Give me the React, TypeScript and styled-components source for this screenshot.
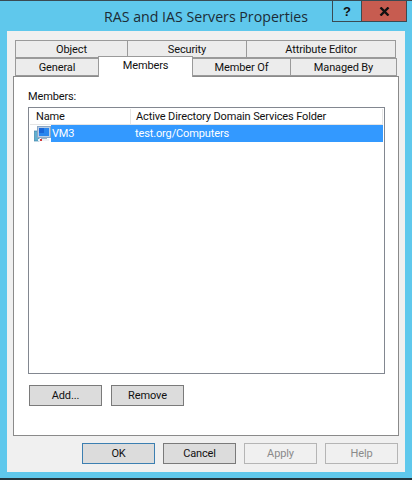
import React from 'react';
import styled, { createGlobalStyle } from 'styled-components';

const GlobalStyle = createGlobalStyle`
  html, body {
    margin: 0;
    padding: 0;
    background: #5fc8ec;
  }
  * {
    box-sizing: border-box;
  }
`;

const Window = styled.div`
  position: relative;
  width: 412px;
  height: 480px;
  display: flex;
  flex-direction: column;
  background: #5fc8ec;
  border-top: 1px solid #3a4a52;
  border-bottom: 2px solid #23343c;
  font-family: Roboto, 'Liberation Sans', sans-serif;
  font-size: 11px;
  letter-spacing: -0.13px;
  color: #111;
  overflow: hidden;
`;

const TitleBar = styled.div`
  height: 30px;
  flex: none;
  display: flex;
  align-items: center;
  justify-content: center;
  font-family: 'Open Sans', sans-serif;
  font-size: 14.2px;
  letter-spacing: 0;
  color: #1c2c36;
`;

const Controls = styled.div`
  position: absolute;
  top: 0;
  right: 5px;
  display: flex;
`;

const HelpControl = styled.div`
  width: 29px;
  height: 21px;
  display: flex;
  align-items: center;
  justify-content: center;
  border: 1px solid #3a4a52;
  border-top: none;
  border-right: none;
  font: bold 13px 'Liberation Sans', sans-serif;
  color: #111;
`;

const CloseControl = styled.div`
  width: 46px;
  height: 21px;
  display: flex;
  align-items: center;
  justify-content: center;
  background: #c75c50;
  border: 1px solid #3a4a52;
  border-top: none;
`;

const Panel = styled.div`
  flex: 1;
  margin: 0 7px 6px;
  padding: 9px 6px 8px;
  display: flex;
  flex-direction: column;
  background: #f0f0f0;
`;

const TabRow = styled.div<{ $front?: boolean }>`
  display: flex;
  height: 18px;
  flex: none;
  margin: 0 2px;
  position: relative;
  z-index: ${(p) => (p.$front ? 2 : 1)};
`;

const Tab = styled.div<{ $width: number; $active?: boolean }>`
  width: ${(p) => p.$width}px;
  flex: none;
  display: flex;
  align-items: center;
  justify-content: center;
  background: ${(p) => (p.$active ? '#fff' : '#ececec')};
  border: 1px solid #9a9a9a;
  border-bottom: ${(p) => (p.$active ? 'none' : '1px solid #9a9a9a')};
  margin-top: ${(p) => (p.$active ? '-2px' : '0')};
  height: ${(p) => (p.$active ? '21px' : '18px')};
  padding: ${(p) => (p.$active ? '0 0 3px' : '1px 0 0')};
  margin-left: -1px;
  &:first-child {
    margin-left: 0;
  }
`;

const TabPage = styled.div`
  flex: 1;
  padding: 9px 13px 0 14px;
  display: flex;
  flex-direction: column;
  background: #fff;
  border: 1px solid #8a8a8a;
`;

const Label = styled.div`
  height: 21px;
  display: flex;
  align-items: center;
`;

const List = styled.div`
  height: 267px;
  flex: none;
  padding: 1px;
  border: 1px solid #828790;
  background: #fff;
`;

const HeaderRow = styled.div`
  height: 16px;
  display: flex;
  border-bottom: 1px solid #e5e5e5;
`;

const HeaderCell = styled.div<{ $width?: number }>`
  width: ${(p) => (p.$width ? `${p.$width}px` : 'auto')};
  flex: ${(p) => (p.$width ? 'none' : '1')};
  display: flex;
  align-items: center;
  padding-left: ${(p) => (p.$width ? '6px' : '5px')};
  border-right: 1px solid #e5e5e5;
`;

const MemberRow = styled.div`
  height: 17px;
  display: flex;
  align-items: center;
`;

const IconCell = styled.div`
  width: 21px;
  height: 16px;
  flex: none;
  display: flex;
  align-items: center;
  justify-content: flex-end;
`;

const SelectedBand = styled.div`
  flex: 1;
  height: 17px;
  display: flex;
  align-items: center;
  background: #3399ff;
  color: #fff;
`;

const NameCell = styled.div`
  width: 84px;
  padding-left: 1px;
`;

const ActionRow = styled.div`
  display: flex;
  gap: 9px;
  margin: 11px 0 0 1px;
`;

const Button = styled.div<{ $variant?: 'default' | 'focus' | 'disabled' }>`
  width: 73px;
  height: 21px;
  display: flex;
  align-items: center;
  justify-content: center;
  background: ${(p) => (p.$variant === 'disabled' ? '#f0f0f0' : '#dcdcdc')};
  color: ${(p) => (p.$variant === 'disabled' ? '#8a8a8a' : '#111')};
  border: 1px solid
    ${(p) =>
      p.$variant === 'focus' ? '#3c7fb1' : p.$variant === 'disabled' ? '#b5b5b5' : '#7a7a7a'};
`;

const Footer = styled.div`
  display: flex;
  justify-content: flex-end;
  gap: 8px;
  margin: 7px 1px 0 0;
`;

const ComputerIcon = () => (
  <svg width="17" height="16" viewBox="0 0 17 16">
    <rect x="0.5" y="5" width="4.5" height="10" fill="#5fb0d0" stroke="#3f86ad" strokeWidth="0.7" />
    <rect x="3.5" y="0.5" width="13" height="11" fill="#b9cfe6" stroke="#8ba6c4" />
    <rect x="5" y="2" width="10" height="8" fill="#2a86ee" />
    <rect x="5" y="2" width="5" height="5" fill="#1a66d8" />
    <rect x="7" y="11.5" width="6" height="1.5" fill="#9db2c6" />
    <rect x="4" y="13" width="11" height="2" fill="#eef2f6" />
    <rect x="6" y="13" width="2" height="2" fill="#d23b3b" />
  </svg>
);

const CloseGlyph = () => (
  <svg width="11" height="9" viewBox="0 0 11 9">
    <path d="M1.5 0.5 L9.5 8.5 M9.5 0.5 L1.5 8.5" stroke="#111" strokeWidth="2.4" />
  </svg>
);

const App: React.FC = () => {
  return (
    <Window>
      <GlobalStyle />
      <TitleBar>RAS and IAS Servers Properties</TitleBar>
      <Controls>
        <HelpControl>?</HelpControl>
        <CloseControl>
          <CloseGlyph />
        </CloseControl>
      </Controls>
      <Panel>
        <TabRow>
          <Tab $width={113}>Object</Tab>
          <Tab $width={120}>Security</Tab>
          <Tab $width={150}>Attribute Editor</Tab>
        </TabRow>
        <TabRow $front>
          <Tab $width={84}>General</Tab>
          <Tab $width={95} $active>
            Members
          </Tab>
          <Tab $width={99}>Member Of</Tab>
          <Tab $width={107}>Managed By</Tab>
        </TabRow>
        <TabPage>
          <Label>Members:</Label>
          <List>
            <HeaderRow>
              <HeaderCell $width={101}>Name</HeaderCell>
              <HeaderCell>Active Directory Domain Services Folder</HeaderCell>
            </HeaderRow>
            <MemberRow>
              <IconCell>
                <ComputerIcon />
              </IconCell>
              <SelectedBand>
                <NameCell>VM3</NameCell>
                test.org/Computers
              </SelectedBand>
            </MemberRow>
          </List>
          <ActionRow>
            <Button>Add...</Button>
            <Button>Remove</Button>
          </ActionRow>
        </TabPage>
        <Footer>
          <Button $variant="focus">OK</Button>
          <Button>Cancel</Button>
          <Button $variant="disabled">Apply</Button>
          <Button $variant="disabled">Help</Button>
        </Footer>
      </Panel>
    </Window>
  );
};

export default App;
